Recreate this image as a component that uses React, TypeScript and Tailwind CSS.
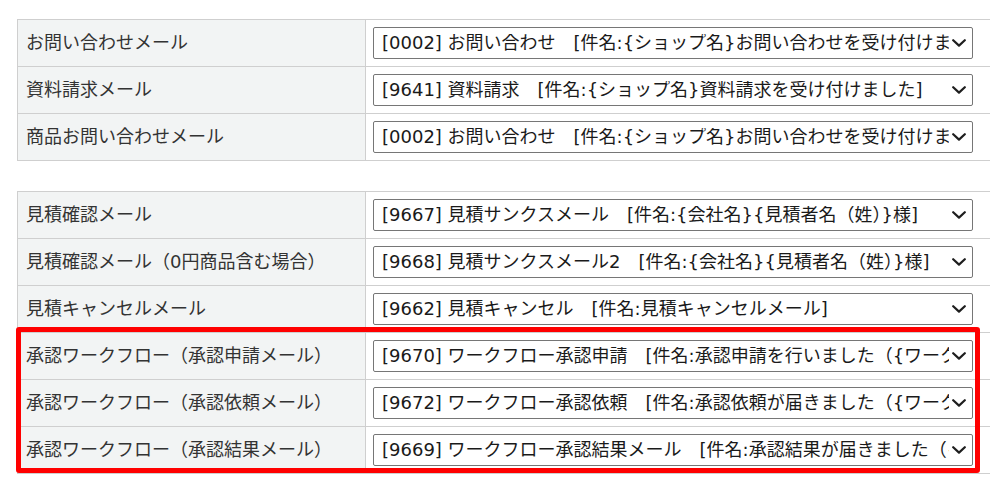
import React from "react";

type Row = { label: string; value: string };

const group1: Row[] = [
  { label: "お問い合わせメール", value: "[0002] お問い合わせ\u3000[件名:{ショップ名}お問い合わせを受け付けました]" },
  { label: "資料請求メール", value: "[9641] 資料請求\u3000[件名:{ショップ名}資料請求を受け付けました]" },
  { label: "商品お問い合わせメール", value: "[0002] お問い合わせ\u3000[件名:{ショップ名}お問い合わせを受け付けました]" },
];

const group2: Row[] = [
  { label: "見積確認メール", value: "[9667] 見積サンクスメール\u3000[件名:{会社名}{見積者名（姓）}様]" },
  { label: "見積確認メール（0円商品含む場合）", value: "[9668] 見積サンクスメール2\u3000[件名:{会社名}{見積者名（姓）}様]" },
  { label: "見積キャンセルメール", value: "[9662] 見積キャンセル\u3000[件名:見積キャンセルメール]" },
  { label: "承認ワークフロー（承認申請メール）", value: "[9670] ワークフロー承認申請\u3000[件名:承認申請を行いました（{ワークフロー名}）]" },
  { label: "承認ワークフロー（承認依頼メール）", value: "[9672] ワークフロー承認依頼\u3000[件名:承認依頼が届きました（{ワークフロー名}）]" },
  { label: "承認ワークフロー（承認結果メール）", value: "[9669] ワークフロー承認結果メール\u3000[件名:承認結果が届きました（{ワークフロー名}）]" },
];

function FakeSelect({ value }: { value: string }) {
  return (
    <div className="flex h-[32px] w-[600px] items-center rounded-[2px] border border-[#767676] bg-white pl-[8px] pr-[6px]">
      <span className="min-w-0 flex-1 overflow-hidden whitespace-nowrap text-[#1a1a1a]">{value}</span>
      <svg width="14" height="8" viewBox="0 0 14 8" className="ml-[3px] shrink-0">
        <path d="M1.2 1.2 L7 6.6 L12.8 1.2" fill="none" stroke="#1e1e1e" strokeWidth="2.2" strokeLinecap="round" strokeLinejoin="round" />
      </svg>
    </div>
  );
}

function TableRow({ row, first }: { row: Row; first: boolean }) {
  return (
    <div className={first ? "flex h-[46px]" : "flex h-[47px] border-t border-[#cfcfcf]"}>
      <div className="flex w-[348px] shrink-0 items-center border-r border-[#cfcfcf] bg-[#f2f4f4] pl-[8px] text-[#333333]">
        {row.label}
      </div>
      <div className="flex flex-1 items-center pl-[7px]">
        <FakeSelect value={row.value} />
      </div>
    </div>
  );
}

function Table({ rows, children }: { rows: Row[]; children?: React.ReactNode }) {
  return (
    <div className="relative w-[990px] border-y border-l border-[#cfcfcf]">
      {rows.map((r, i) => (
        <TableRow key={i} row={r} first={i === 0} />
      ))}
      {children}
    </div>
  );
}

export default function App() {
  return (
    <div
      className="h-[493px] w-[990px] overflow-hidden bg-white pl-[17px] pt-[19px] text-[18px] leading-none"
      style={{ fontFamily: '"DejaVu Sans", "Noto Sans CJK JP", sans-serif' }}
    >
      <Table rows={group1} />
      <div className="h-[30px]" />
      <Table rows={group2}>
        <div className="pointer-events-none absolute left-[-2px] top-[135px] h-[146px] w-[964px] rounded-[3px] border-[5px] border-[#ff0000]" />
      </Table>
    </div>
  );
}
